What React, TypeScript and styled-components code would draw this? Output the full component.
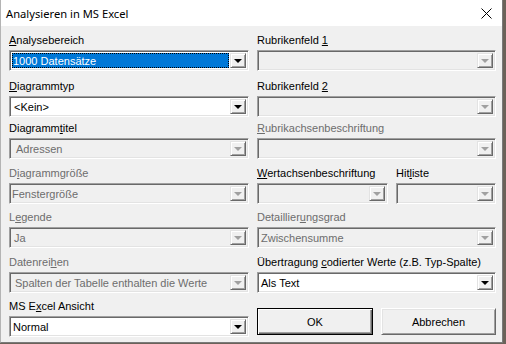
import styled, { createGlobalStyle } from 'styled-components';

// === STYLES ===

const GlobalStyle = createGlobalStyle`
  html, body {
    margin: 0;
    padding: 0;
    background: #6b6259;
  }
  body {
    width: 506px;
    height: 344px;
    overflow: hidden;
  }
`;

const Window = styled.div`
  width: 503px;
  height: 343px;
  box-sizing: border-box;
  border: 1px solid #7a7a7a;
  border-left-color: #b4b4b4;
  border-top: none;
  background: #f0f0f0;
  display: flex;
  flex-direction: column;
  font-family: 'Liberation Sans', Arial, sans-serif;
  font-size: 11px;
  color: #000;
`;

const TitleBar = styled.div`
  height: 26px;
  flex: none;
  background: #fff;
  display: flex;
  align-items: center;
  justify-content: space-between;
  padding: 0 10px 0 5px;
  font-family: 'Noto Sans', 'Open Sans', sans-serif;
  font-size: 11.2px;
`;

const CloseIcon = styled.svg`
  width: 11px;
  height: 11px;
  margin-top: 1px;
`;

const Body = styled.div`
  display: grid;
  grid-template-columns: 240px 239px;
  grid-template-rows: 46px 42px 45px 44px 45px 44px auto;
  column-gap: 8px;
  padding: 4px 0 0 8px;
`;

const Field = styled.div`
  display: flex;
  flex-direction: column;
  min-width: 0;
`;

const Label = styled.div<{ $disabled?: boolean }>`
  height: 20px;
  line-height: 20px;
  white-space: nowrap;
  color: ${p => (p.$disabled ? '#6d6d6d' : '#000')};
`;

const Combo = styled.div<{ $enabled?: boolean }>`
  height: 21px;
  box-sizing: border-box;
  display: flex;
  align-items: stretch;
  background: ${p => (p.$enabled ? '#fff' : '#f0f0f0')};
  border-top: 1px solid #a0a0a0;
  border-left: 1px solid #a0a0a0;
  border-right: 1px solid #ffffff;
  border-bottom: 1px solid #ffffff;
  box-shadow: inset 1px 1px 0 #696969, inset -1px -1px 0 #e3e3e3;
  padding: 2px;
`;

const ComboText = styled.div<{ $enabled?: boolean; $selected?: boolean; $pad?: number }>`
  flex: 1;
  min-width: 0;
  display: flex;
  align-items: center;
  padding-left: ${p => p.$pad ?? 1}px;
  white-space: nowrap;
  overflow: hidden;
  color: ${p => (p.$selected ? '#fff' : p.$enabled ? '#000' : '#6d6d6d')};
  background: ${p => (p.$selected ? '#0078d7' : 'transparent')};
  outline: ${p => (p.$selected ? '1px dotted #000' : 'none')};
  outline-offset: -1px;
  margin-right: 1px;
`;

const DropButton = styled.div`
  width: 16px;
  flex: none;
  box-sizing: border-box;
  background: #f0f0f0;
  border-top: 1px solid #e3e3e3;
  border-left: 1px solid #e3e3e3;
  border-right: 1px solid #696969;
  border-bottom: 1px solid #696969;
  box-shadow: inset 1px 1px 0 #fff, inset -1px -1px 0 #a0a0a0;
  display: flex;
  align-items: center;
  justify-content: center;
`;

const Arrow = styled.div<{ $enabled?: boolean }>`
  width: 0;
  height: 0;
  border-left: 4px solid transparent;
  border-right: 4px solid transparent;
  border-top: 4px solid ${p => (p.$enabled ? '#000' : '#a0a0a0')};
  margin-top: 1px;
`;

const SplitRow = styled.div`
  display: grid;
  grid-template-columns: 131px 100px;
  column-gap: 8px;
`;

const ButtonRow = styled.div`
  display: grid;
  grid-template-columns: 116px 115px;
  column-gap: 8px;
  margin-top: 12px;
`;

const Button = styled.div<{ $default?: boolean }>`
  height: 27px;
  box-sizing: border-box;
  display: flex;
  align-items: center;
  justify-content: center;
  background: #f0f0f0;
  border: 1px solid ${p => (p.$default ? '#000' : 'transparent')};
  box-shadow: inset 1px 1px 0 #fff, inset -1px -1px 0 #696969,
    inset -2px -2px 0 #a0a0a0;
  ${p =>
    !p.$default &&
    `border-color: #fff #696969 #696969 #fff;
     box-shadow: inset 1px 1px 0 #e3e3e3, inset -1px -1px 0 #a0a0a0;`}
`;

// === DATA ===

type Item = {
  label: React.ReactNode;
  labelDisabled?: boolean;
  value?: string;
  enabled?: boolean;
  selected?: boolean;
  pad?: number;
};

const left: Item[] = [
  { label: <><u>A</u>nalysebereich</>, value: '1000 Datensätze', enabled: true, selected: true },
  { label: <><u>D</u>iagrammtyp</>, value: '<Kein>', enabled: true, pad: 2 },
  { label: <>Diagramm<u>t</u>itel</>, value: 'Adressen', pad: 4 },
  { label: <>D<u>i</u>agrammgröße</>, labelDisabled: true, value: 'Fenstergröße', pad: 0 },
  { label: <>L<u>e</u>gende</>, labelDisabled: true, value: 'Ja', pad: 2 },
  { label: <>Datenrei<u>h</u>en</>, labelDisabled: true, value: 'Spalten der Tabelle enthalten die Werte', pad: 3 },
  { label: <>MS E<u>x</u>cel Ansicht</>, value: 'Normal', enabled: true, pad: 1 },
];

// === COMPONENTS ===

function ComboBox({ item }: { item: Item }) {
  return (
    <Combo $enabled={item.enabled}>
      <ComboText $enabled={item.enabled} $selected={item.selected} $pad={item.pad}>
        {item.value}
      </ComboText>
      <DropButton>
        <Arrow $enabled={item.enabled} />
      </DropButton>
    </Combo>
  );
}

function LabeledCombo({ item }: { item: Item }) {
  return (
    <Field>
      <Label $disabled={item.labelDisabled}>{item.label}</Label>
      <ComboBox item={item} />
    </Field>
  );
}

export default function App() {
  return (
    <>
      <GlobalStyle />
      <Window>
        <TitleBar>
          <span>Analysieren in MS Excel</span>
          <CloseIcon viewBox="0 0 11 11">
            <path d="M0.5 0.5 L10.5 10.5 M10.5 0.5 L0.5 10.5" stroke="#000" strokeWidth="1" fill="none" />
          </CloseIcon>
        </TitleBar>
        <Body>
          {/* row 1 */}
          <LabeledCombo item={left[0]} />
          <LabeledCombo item={{ label: <>Rubrikenfeld <u>1</u></> }} />
          {/* row 2 */}
          <LabeledCombo item={left[1]} />
          <LabeledCombo item={{ label: <>Rubrikenfeld <u>2</u></> }} />
          {/* row 3 */}
          <LabeledCombo item={left[2]} />
          <LabeledCombo item={{ label: <><u>R</u>ubrikachsenbeschriftung</>, labelDisabled: true }} />
          {/* row 4 */}
          <LabeledCombo item={left[3]} />
          <SplitRow>
            <LabeledCombo item={{ label: <><u>W</u>ertachsenbeschriftung</> }} />
            <LabeledCombo item={{ label: <>Hit<u>l</u>iste</> }} />
          </SplitRow>
          {/* row 5 */}
          <LabeledCombo item={left[4]} />
          <LabeledCombo
            item={{ label: <>Detaillier<u>u</u>ngsgrad</>, labelDisabled: true, value: 'Zwischensumme', pad: 1 }}
          />
          {/* row 6 */}
          <LabeledCombo item={left[5]} />
          <LabeledCombo
            item={{
              label: <>Übertragung <u>c</u>odierter Werte (z.B. Typ-Spalte)</>,
              value: 'Als Text',
              enabled: true,
            }}
          />
          {/* row 7 */}
          <LabeledCombo item={left[6]} />
          <ButtonRow>
            <Button $default>OK</Button>
            <Button>Abbrechen</Button>
          </ButtonRow>
        </Body>
      </Window>
    </>
  );
}
